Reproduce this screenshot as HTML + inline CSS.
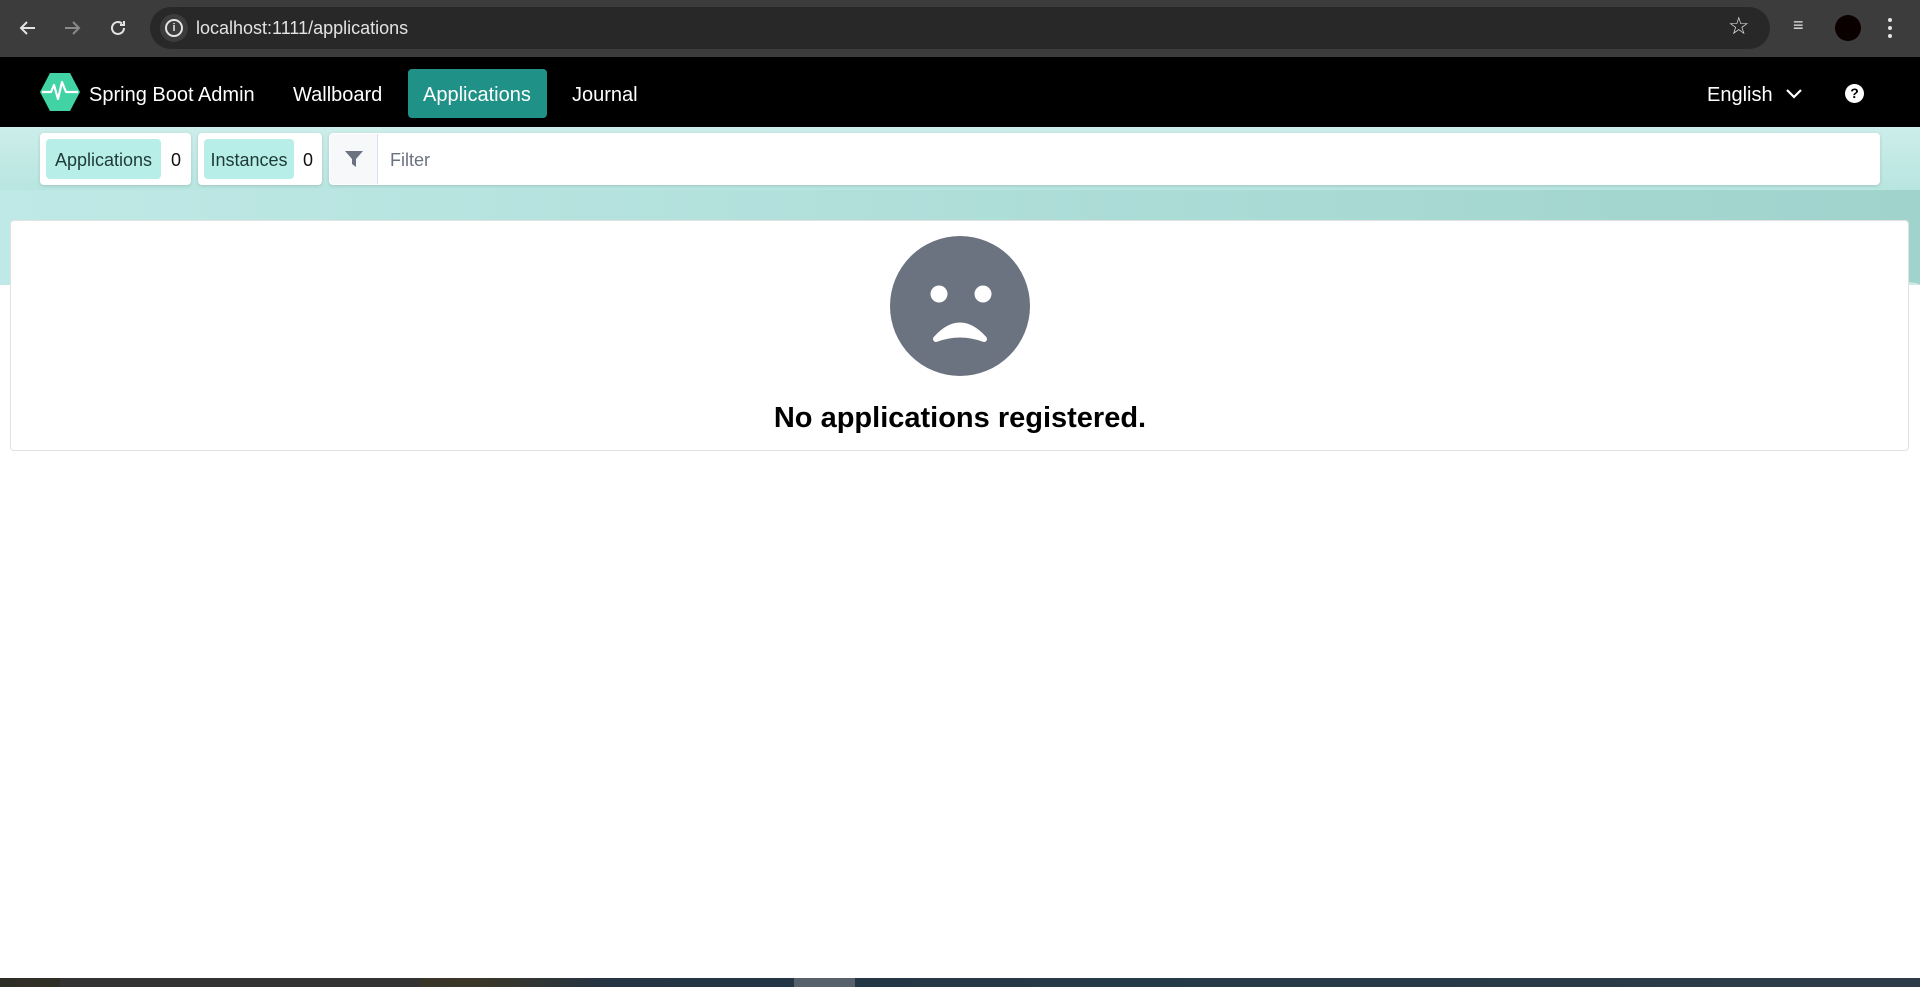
<!DOCTYPE html>
<html><head><meta charset="utf-8"><style>
*{box-sizing:border-box;margin:0;padding:0}
body{width:1920px;height:987px;overflow:hidden;background:#fff;font-family:"Liberation Sans",sans-serif;position:relative}
.abs{position:absolute}
</style></head><body>
<div class="abs" style="left:0;top:0;width:1920px;height:57px;background:#3c3c3c"></div>
<div class="abs" style="left:150px;top:7px;width:1620px;height:42px;background:#282828;border-radius:21px"></div>
<svg class="abs" style="left:16px;top:16px" width="24" height="24" viewBox="0 0 24 24"><path d="M19 12H5M11 6l-6 6 6 6" stroke="#e3e3e3" stroke-width="2" fill="none"/></svg>
<svg class="abs" style="left:60px;top:16px" width="24" height="24" viewBox="0 0 24 24"><path d="M5 12h14M13 6l6 6-6 6" stroke="#8a8a8a" stroke-width="2" fill="none"/></svg>
<svg class="abs" style="left:106px;top:16px" width="24" height="24" viewBox="0 0 24 24"><path d="M18 12a6 6 0 1 1-2-4.5M18 5v4h-4" stroke="#e3e3e3" stroke-width="2" fill="none"/></svg>
<div class="abs" style="left:160px;top:14px;width:28px;height:28px;border-radius:50%;background:#3c3c3c"></div>
<div class="abs" style="left:165px;top:19px;width:18px;height:18px;border-radius:50%;border:2px solid #e3e3e3;color:#e3e3e3;font-size:11px;font-weight:bold;text-align:center;line-height:14px">i</div>
<div class="abs" style="left:196px;top:18px;color:#e3e3e3;font-size:18px">localhost:1111/applications</div>
<div class="abs" style="left:1728px;top:12px;color:#e3e3e3;font-size:24px">☆</div>
<div class="abs" style="left:1793px;top:15px;color:#e3e3e3;font-size:18px">≡</div>
<div class="abs" style="left:1835px;top:15px;width:26px;height:26px;border-radius:50%;background:#0a0000"></div>
<div class="abs" style="left:1888px;top:18px;width:4px;height:4px;border-radius:2px;background:#e3e3e3;box-shadow:0 8px #e3e3e3,0 16px #e3e3e3"></div>
<div class="abs" style="left:0;top:57px;width:1920px;height:70px;background:#000"></div>
<svg class="abs" style="left:40px;top:73px" width="40" height="38" viewBox="0 0 40 38"><polygon points="10,0 30,0 40,19 30,38 10,38 0,19" fill="#42d3a5"/><path d="M2 19h9l3-7 4 14 4-17 4 10h12" stroke="#fff" stroke-width="2.2" fill="none" stroke-linejoin="round"/></svg>
<div class="abs" style="left:89px;top:84px;color:#fff;font-size:20px">Spring Boot Admin</div>
<div class="abs" style="left:293px;top:84px;color:#fff;font-size:20px">Wallboard</div>
<div class="abs" style="left:408px;top:69px;width:139px;height:49px;background:#1f9186;border-radius:4px"></div>
<div class="abs" style="left:423px;top:84px;color:#fff;font-size:20px">Applications</div>
<div class="abs" style="left:572px;top:84px;color:#fff;font-size:20px">Journal</div>
<div class="abs" style="left:1707px;top:84px;color:#fff;font-size:20px">English</div>
<svg class="abs" style="left:1785px;top:87px" width="18" height="14" viewBox="0 0 18 14"><path d="M2 3l7 7 7-7" stroke="#fff" stroke-width="2.2" fill="none"/></svg>
<div class="abs" style="left:1845px;top:84px;width:19px;height:19px;border-radius:50%;background:#fff;color:#000;font-size:14px;font-weight:bold;text-align:center;line-height:19px">?</div>
<div class="abs" style="left:0;top:127px;width:1920px;height:160px;background:linear-gradient(180deg,#cdeeea 0%,#b5e4df 45%,#a8d9d4 100%)"></div>
<div class="abs" style="left:0;top:190px;width:1920px;height:97px;background:linear-gradient(90deg,#bfe9e6,#9fd3cc)"></div>
<div class="abs" style="left:0;top:265px;width:1920px;height:40px;background:#fff;border-radius:50% 50% 0 0/40px 20px 0 0;opacity:.5"></div>
<div class="abs" style="left:0;top:285px;width:1920px;height:702px;background:#fff"></div>
<div class="abs" style="left:40px;top:133px;width:151px;height:52px;background:#fff;border-radius:4px;box-shadow:0 1px 3px rgba(0,0,0,.15)"></div>
<div class="abs" style="left:46px;top:139px;width:115px;height:40px;background:#b7eee8;border-radius:4px;color:#1f3a37;font-size:18px;line-height:42px;text-align:center">Applications</div>
<div class="abs" style="left:171px;top:150px;font-size:18px;color:#111">0</div>
<div class="abs" style="left:198px;top:133px;width:124px;height:52px;background:#fff;border-radius:4px;box-shadow:0 1px 3px rgba(0,0,0,.15)"></div>
<div class="abs" style="left:204px;top:139px;width:90px;height:40px;background:#b7eee8;border-radius:4px;color:#1f3a37;font-size:18px;line-height:42px;text-align:center">Instances</div>
<div class="abs" style="left:303px;top:150px;font-size:18px;color:#111">0</div>
<div class="abs" style="left:329px;top:133px;width:1551px;height:52px;background:#fff;border-radius:4px;box-shadow:0 1px 3px rgba(0,0,0,.15)"></div>
<div class="abs" style="left:330px;top:134px;width:48px;height:50px;background:#f7f8fa;border-right:1px solid #dde"></div>
<svg class="abs" style="left:345px;top:151px" width="18" height="16" viewBox="0 0 18 16"><path d="M0 0h18l-7 8v8l-4-3V8z" fill="#6b7280"/></svg>
<div class="abs" style="left:390px;top:150px;font-size:18px;color:#6b7280">Filter</div>
<div class="abs" style="left:10px;top:220px;width:1899px;height:231px;background:#fff;border:1px solid #e2e2e2;border-radius:4px"></div>
<svg class="abs" style="left:890px;top:236px" width="140" height="140" viewBox="0 0 140 140"><circle cx="70" cy="70" r="70" fill="#6b7280"/><circle cx="49" cy="58" r="8.5" fill="#fff"/><circle cx="93" cy="58" r="8.5" fill="#fff"/><path d="M46 103 Q70 76 94 103 Q70 94 46 103Z" fill="#fff" stroke="#fff" stroke-width="6" stroke-linejoin="round"/></svg>
<div class="abs" style="left:0;top:402px;width:1920px;text-align:center;font-size:29px;font-weight:bold;color:#000">No applications registered.</div>
<div class="abs" style="left:0;top:978px;width:1920px;height:9px;background:linear-gradient(90deg,#2f2e26 0%,#3a3628 25%,#243444 32%,#253a47 60%,#2e3b48 100%)"></div>
<div class="abs" style="left:60px;top:978px;width:360px;height:9px;background:#333"></div>
<div class="abs" style="left:794px;top:978px;width:61px;height:9px;background:#56616c"></div>
</body></html>
